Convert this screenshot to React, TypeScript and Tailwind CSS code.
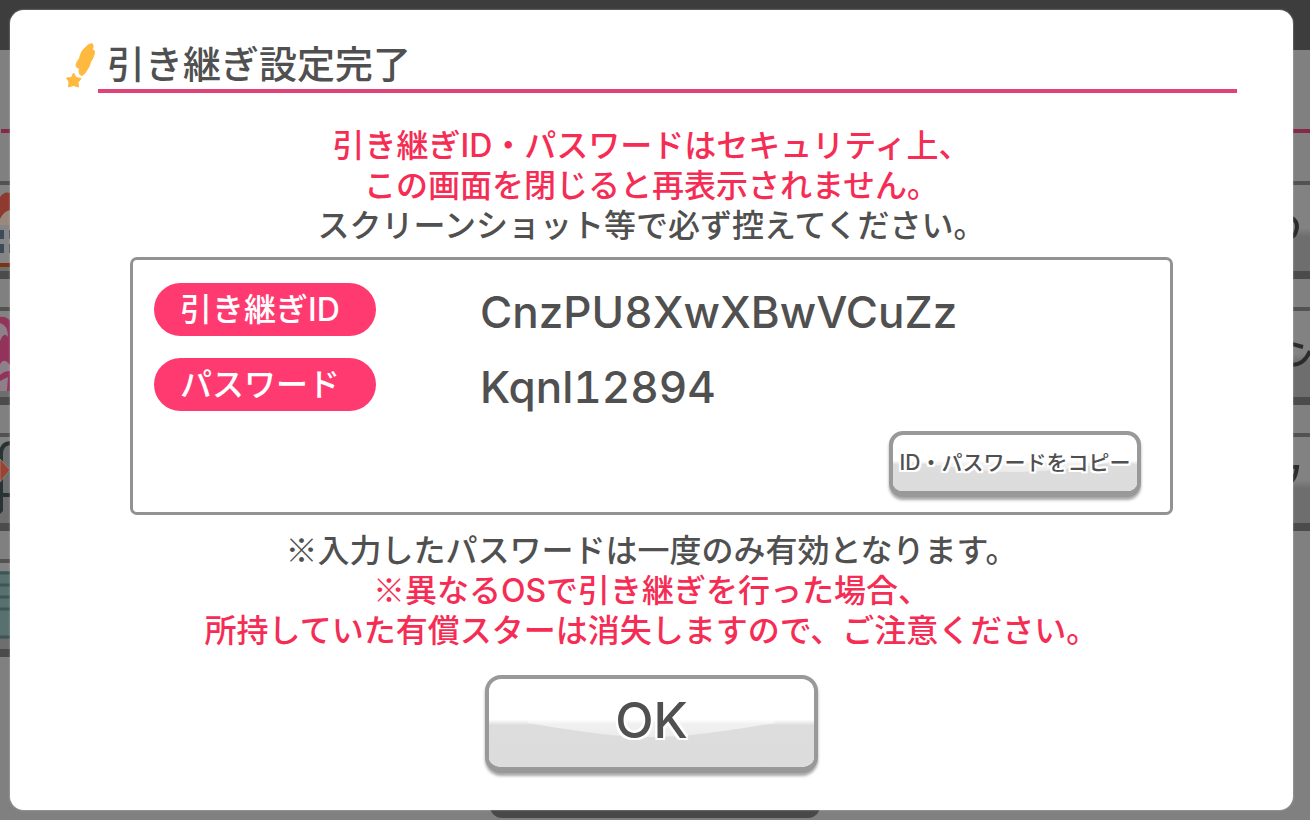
import React from "react";

interface GlossyButtonProps {
  className: string;
  children: React.ReactNode;
}

interface CredentialProps {
  label: string;
  value: string;
}

interface MenuRowProps {
  className?: string;
  left: React.ReactNode;
  right?: React.ReactNode;
}

const GlossyButton: React.FC<GlossyButtonProps> = ({ className, children }) => (
  <button
    type="button"
    className={`relative overflow-hidden border-4 border-b-[6px] border-[#999999] bg-white text-[#505050] shadow-[0_3px_3px_rgba(0,0,0,0.35)] ${className}`}
  >
    <svg
      className="absolute inset-0 h-full w-full"
      viewBox="0 0 100 100"
      preserveAspectRatio="none"
      aria-hidden="true"
    >
      <defs>
        <linearGradient id="gloss" x1="0" y1="0" x2="0" y2="1">
          <stop offset="0" stopColor="#ffffff" />
          <stop offset="0.25" stopColor="#f1f1f1" />
          <stop offset="1" stopColor="#ececec" />
        </linearGradient>
        <linearGradient id="shade" x1="0" y1="0" x2="0" y2="1">
          <stop offset="0" stopColor="#ffffff" />
          <stop offset="0.12" stopColor="#dddddd" />
          <stop offset="1" stopColor="#dcdcdc" />
        </linearGradient>
      </defs>
      <rect x="0" y="46" width="100" height="54" fill="url(#shade)" />
      <path d="M12 46 V50 C30 61 40 66 50 66 C60 66 70 61 88 50 V46 Z" fill="url(#gloss)" />
    </svg>
    <span className="relative [text-shadow:2px_0_0_#fff,-2px_0_0_#fff,0_2px_0_#fff,0_-2px_0_#fff,2px_2px_0_#fff,-2px_2px_0_#fff,2px_-2px_0_#fff,-2px_-2px_0_#fff]">
      {children}
    </span>
  </button>
);

const Credential: React.FC<CredentialProps> = ({ label, value }) => (
  <div className="flex items-center">
    <dt className="h-[53px] w-[222px] shrink-0 rounded-full bg-[#ff3a70] pl-[26px] text-[32px] leading-[53px] text-white">
      {label}
    </dt>
    <dd className="ml-[104px] pt-[5px] text-[44px] leading-[48px] tabular-nums">
      {value}
    </dd>
  </div>
);

// Inter has its own small reference mark, so take the full-width one
const NoteMark = () => (
  <span className="font-['Noto_Sans_CJK_JP',sans-serif] leading-none">※</span>
);

const MenuRow: React.FC<MenuRowProps> = ({ className = "w-full", left, right }) => (
  <div
    className={`flex h-[98px] justify-between border-t-4 border-b-8 border-t-[#525252] border-b-[#4b4b4b] bg-linear-to-b from-[#828282] from-50% to-[#6e6e6e] to-60% ${className}`}
  >
    <svg className="h-[86px] w-[10px]" viewBox="0 0 10 86">
      {left}
    </svg>
    <svg className="h-[86px] w-[18px]" viewBox="0 0 18 86" fill="none" stroke="#2b2b2b" strokeWidth="4">
      {right}
    </svg>
  </div>
);

const ShootingStar = () => (
  <svg className="h-[46px] w-8 shrink-0" viewBox="0 0 32 46" fill="#ffb93e" aria-hidden="true">
    <path
      d="M19 6 Q22 2 26 1.500 Q28 3 26.500 8 Q29 8 28.500 11 Q27 17 24.500 20 Q24 24 21.500 27 Q19 32 16 33.500 Q13 33 13 29.500 L13.500 26.500 Q10 26 10 23 Q11 19 13.500 16.500 Q15 9 19 6 Z"
      stroke="#ffb93e"
      strokeLinejoin="round"
    />
    <path
      d="M7.500 31 L10 35.500 L15 36.500 L12 40.500 L12.500 45 L7.500 43.500 L2.500 45 L3 40 L0.500 36 L5.500 35.500 Z"
      stroke="#ffb93e"
      strokeLinejoin="round"
    />
  </svg>
);

const MenuBackdrop = () => (
  <div
    className="flex min-h-screen flex-col bg-[#808080] [grid-area:1/1]"
    aria-hidden="true"
  >
    <div className="h-[50px] bg-[#3d3d3d]" />
    <div className="mt-[79px] ml-px h-1 bg-[#85294a]" />
    <div className="mt-12 flex flex-col gap-7">
      <MenuRow
        left={
          <>
            <path d="M0 20 L10 20 V82 H0 Z" fill="#858585" />
            <path d="M0 12 Q4 6 10 8 V26 Q5 26 0 34 Z" fill="#8f3a30" />
            <path d="M0 34 Q4 26 10 25 V40 H0 Z" fill="#99897d" />
            <path d="M0 45 H4 V54 H0 Z M0 59 H4 V68 H0 Z M9 45 H10 V54 H9 Z M9 59 H10 V68 H9 Z" fill="#3c4a5a" />
            <path d="M0 78 H10 V82 H0 Z" fill="#7a3313" />
          </>
        }
        right={<path d="M0 33 Q5 36 5 42 Q4 50 0 52" />}
      />
      <MenuRow
        left={
          <>
            <path d="M0 6 Q6 5 10 10 V80 H0 Z" fill="#92335c" />
            <path d="M0 12 Q8 14 8 26 Q4 20 0 30 Z M0 53 Q4 46 10 54 V60 Q4 60 0 64 Z M0 70 L8 66 L7 80 H0 Z" fill="#8f7f88" />
          </>
        }
        right={<path d="M0 33 L11 36 M0 54 Q12 54 18 40" />}
      />
      <MenuRow
        left={
          <>
            <path d="M10 6 Q0 7 1 20 V58 H10" fill="#6c7070" stroke="#2a3333" strokeWidth="4" />
            <path d="M0 22 L10 33 L0 45 Z" fill="#9b4330" stroke="#8b8075" />
            <path d="M0 54 H3 V74 L0 77 Z" fill="#2a3333" />
          </>
        }
        right={<path d="M0 30 H5 Q4 39 0 44" />}
      />
      <MenuRow
        className="w-1/2"
        left={
          <>
            <path d="M0 8 H10 V76 H0 Z" fill="#587070" />
            <path d="M0 10 H10 M0 22 H10 M0 34 H10 M0 46 H10 M0 74 H10" stroke="#3e5456" strokeWidth="3" />
          </>
        }
      />
    </div>
    <div className="mt-auto mb-0.5 h-12 w-[330px] self-center rounded-xl bg-[#484848]" />
  </div>
);

const App = () => (
  <div
    lang="ja"
    className="grid min-h-screen overflow-hidden font-['Inter','Noto_Sans_CJK_JP',sans-serif] font-medium text-[#505050]"
  >
    <MenuBackdrop />
    <div className="flex py-[10px] pr-[17px] pl-[10px] [grid-area:1/1]">
      <main
        role="dialog"
        aria-labelledby="dialog-title"
        className="relative w-full rounded-[14px] bg-white px-14 pt-8 shadow-[0_0_2px_rgba(225,225,225,0.7)]"
      >
        <header className="flex items-start">
          <ShootingStar />
          <h1
            id="dialog-title"
            className="flex-1 border-b-4 border-[#df4378] pb-[3px] pl-[9px] text-[38px] leading-[44px]"
          >
            引き継ぎ設定完了
          </h1>
        </header>

        <p className="mt-[33px] text-center text-[32px] leading-10">
          <span className="text-[#f52d55]">
            引き継ぎID・パスワードはセキュリティ上、
            <br />
            この画面を閉じると再表示されません。
          </span>
          <br />
          スクリーンショット等で必ず控えてください。
        </p>

        <section className="mx-16 mt-[11px] flex flex-col rounded-[7px] border-3 border-[#929292] pt-[23px] pr-[29px] pb-[15px] pl-[21px]">
          <dl className="flex flex-col gap-[22px]">
            <Credential label="引き継ぎID" value="CnzPU8XwXBwVCuZz" />
            <Credential label="パスワード" value="Kqnl12894" />
          </dl>
          <GlossyButton className="mt-5 h-[66px] w-[252px] self-end rounded-[14px] text-[21px] leading-8 whitespace-nowrap">
            ID・パスワードをコピー
          </GlossyButton>
        </section>

        <p className="mt-4 text-center text-[32px] leading-10">
          <NoteMark />
          入力したパスワードは一度のみ有効となります。
          <br />
          <span className="text-[#f52d55]">
            <NoteMark />
            異なるOSで引き継ぎを行った場合、
            <br />
            所持していた有償スターは消失しますので、ご注意ください。
          </span>
        </p>

        <div className="mt-6 mb-8 flex justify-center">
          <GlossyButton className="h-[98px] w-[333px] rounded-[16px] pb-1.5 text-[50px] leading-[60px]">
            OK
          </GlossyButton>
        </div>
      </main>
    </div>
  </div>
);

export default App;
